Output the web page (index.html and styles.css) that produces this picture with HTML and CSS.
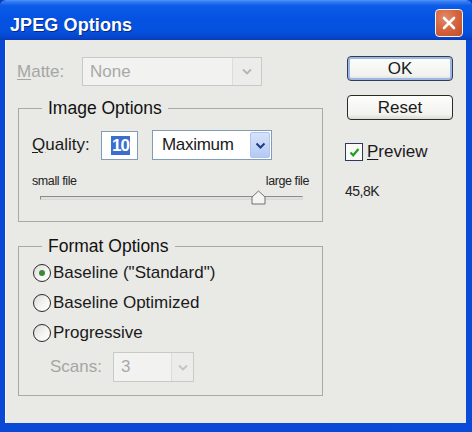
FILE: index.html
```html
<!DOCTYPE html>
<html>
<head>
<meta charset="utf-8">
<link rel="stylesheet" href="styles.css">
</head>
<body>
<div class="window">
  <div class="titlebar">
    <span class="title">JPEG Options</span>
    <button class="close" aria-label="Close">
      <svg width="16" height="16" viewBox="0 0 16 16"><path d="M3 3 L13 13 M13 3 L3 13" stroke="#fff" stroke-width="2.6" stroke-linecap="round"/></svg>
    </button>
  </div>
  <div class="client">
    <div class="left">
      <div class="matte-row">
        <span class="lbl disabled"><u>M</u>atte:</span>
        <div class="select sel-matte disabled-sel">
          <span class="val">None</span>
          <span class="drop"><svg width="10" height="7" viewBox="0 0 10 7"><path d="M1 1.5 L5 5.5 L9 1.5" fill="none" stroke="#b4b4b4" stroke-width="1.8"/></svg></span>
        </div>
      </div>
      <fieldset class="group image-group">
        <legend>Image Options</legend>
        <div class="quality-row">
          <span class="lbl q-lbl"><u>Q</u>uality:</span>
          <div class="qinput"><span class="selected">10</span></div>
          <div class="select sel-max">
            <span class="val">Maximum</span>
            <span class="drop blue"><svg width="11" height="7" viewBox="0 0 11 7"><path d="M1.5 1.5 L5.5 5.5 L9.5 1.5" fill="none" stroke="#1d3b86" stroke-width="2"/></svg></span>
          </div>
        </div>
        <div class="size-labels"><span>small file</span><span>large file</span></div>
        <div class="slider">
          <div class="track"></div>
          <svg class="thumb" width="15" height="15" viewBox="0 0 15 15"><path d="M1 14 L1 7 L7.5 1 L14 7 L14 14 Z" fill="#f4f4f2" stroke="#707070" stroke-width="1"/></svg>
        </div>
      </fieldset>
      <fieldset class="group format-group">
        <legend>Format Options</legend>
        <div class="radio-row"><span class="radio checked"></span><span>Baseline ("Standard")</span></div>
        <div class="radio-row"><span class="radio"></span><span>Baseline Optimized</span></div>
        <div class="radio-row"><span class="radio"></span><span>Progressive</span></div>
        <div class="scans-row">
          <span class="lbl disabled scans-lbl">Scans:</span>
          <div class="select sel-scans disabled-sel">
            <span class="val">3</span>
            <span class="drop"><svg width="10" height="7" viewBox="0 0 10 7"><path d="M1 1.5 L5 5.5 L9 1.5" fill="none" stroke="#c4c4c4" stroke-width="1.8"/></svg></span>
          </div>
        </div>
      </fieldset>
    </div>
    <div class="right">
      <button class="btn default">OK</button>
      <button class="btn">Reset</button>
      <div class="preview-row">
        <span class="check"><svg width="13" height="13" viewBox="0 0 13 13"><path d="M2.5 6.5 L5.2 9.3 L10.5 3" fill="none" stroke="#21a121" stroke-width="2.2"/></svg></span>
        <span><u>P</u>review</span>
      </div>
      <div class="filesize">45,8K</div>
    </div>
  </div>
</div>
</body>
</html>
```
FILE: styles.css
```css
* { box-sizing: border-box; }
html, body { margin: 0; padding: 0; }
body {
  width: 472px;
  height: 432px;
  overflow: hidden;
  font-family: "Liberation Sans", Arial, sans-serif;
  font-size: 17px;
  color: #1a1a1a;
  background: #0b3bc0;
}
.window {
  width: 472px;
  height: 432px;
  display: flex;
  flex-direction: column;
  background: linear-gradient(90deg, #0a48d6 0, #0a4ad8 100%);
  border-top: 1px solid #4c8cf6;
  border-radius: 6px 6px 0 0;
  overflow: hidden;
}
.titlebar {
  height: 39px;
  flex: none;
  display: flex;
  align-items: center;
  justify-content: space-between;
  padding: 0 9px 0 10px;
  background: linear-gradient(180deg, #3b83f4 0%, #0c5ce8 12%, #0552e2 45%, #0552e0 75%, #0747cf 92%, #0a3bb4 100%);
}
.title {
  color: #fff;
  font-weight: bold;
  font-size: 18px;
  letter-spacing: 0.1px;
  text-shadow: 1px 1px 0 #0a2a8a;
  margin-top: 10px;
}
.close {
  width: 28px;
  height: 28px;
  padding: 0;
  margin-top: 4px;
  border: 1.5px solid #f4f4f4;
  border-radius: 4px;
  background: radial-gradient(circle at 35% 30%, #e48a6c 0%, #d6663f 45%, #c04c28 100%);
  display: flex;
  align-items: center;
  justify-content: center;
}
.client {
  flex: 1;
  margin: 0 6px 9px 5px;
  background: #e9e9e6;
  border-left: 1px solid #f6f6f4;
  display: flex;
  padding: 17px 0 0 12px;
}
.left {
  width: 305px;
  display: flex;
  flex-direction: column;
}
.right {
  display: flex;
  flex-direction: column;
  padding-left: 22px;
}
u { text-decoration: underline; text-underline-offset: 2px; }
.lbl.disabled { color: #a6a6a4; }
.matte-row {
  display: flex;
  align-items: center;
  height: 29px;
  margin-left: -1px;
}
.matte-row .lbl { width: 65px; }
.select {
  display: flex;
  align-items: stretch;
  border: 1px solid #7f9db9;
  background: #fff;
}
.select .val {
  flex: 1;
  display: flex;
  align-items: center;
  padding-left: 7px;
}
.select .drop {
  width: 22px;
  display: flex;
  align-items: center;
  justify-content: center;
  margin: 1px;
  border-radius: 2px;
}
.disabled-sel {
  border-color: #c9c9c5;
  background: #f2f2f0;
  color: #a9a9a7;
}
.disabled-sel .drop {
  background: #ececea;
  border-left: 1px solid #dcdcd8;
  margin: 0;
  border-radius: 0;
}
.sel-matte { width: 180px; height: 29px; }
.sel-matte .drop { width: 29px; }
.group {
  margin: 0;
  border: 1px solid #a9a9a6;
  border-radius: 0;
  padding: 0 13px;
  min-width: 0;
}
.group legend {
  margin-left: 10px;
  padding: 0 6px 0 6px;
  font-size: 17.5px;
  color: #111;
  line-height: 20px;
}
.image-group {
  margin-top: 12px;
  padding-top: 12px;
  padding-bottom: 15px;
}
.quality-row {
  display: flex;
  align-items: center;
  height: 30px;
}
.q-lbl { width: 69px; }
.qinput {
  width: 37px;
  height: 29px;
  border: 1px solid #7f9db9;
  background: #fff;
  display: flex;
  align-items: center;
  padding-left: 9px;
}
.qinput .selected {
  background: #3a6fd0;
  color: #fff;
  line-height: 19px;
  padding: 0 1px;
  font-weight: bold;
  letter-spacing: -1px;
}
.sel-max {
  width: 120px;
  height: 30px;
  margin-left: 14px;
}
.sel-max .val { padding-left: 9px; letter-spacing: -0.3px; }
.drop.blue {
  background: linear-gradient(180deg, #d7e3fb 0%, #b5c9f3 100%);
  border: 1px solid #b1c4ef;
  width: 20px;
}
.size-labels {
  display: flex;
  justify-content: space-between;
  font-size: 12.5px;
  letter-spacing: -0.4px;
  margin-top: 14px;
  line-height: 14px;
  color: #222;
}
.slider {
  position: relative;
  height: 16px;
  margin: 2px 6px 0 8px;
}
.track {
  position: absolute;
  left: 0;
  right: 0;
  top: 6px;
  height: 4px;
  border: 1px solid #8c8c8a;
  border-bottom-color: #d8d8d6;
  border-right-color: #d8d8d6;
  background: #e0e0de;
}
.thumb {
  position: absolute;
  left: 211px;
  top: 0;
}
.format-group {
  margin-top: 14px;
  padding-top: 0;
  padding-bottom: 13px;
}
.radio-row {
  display: flex;
  align-items: center;
  height: 30px;
  margin-left: 1px;
}
.radio-row:first-of-type { margin-top: 2px; }
.radio {
  width: 18px;
  height: 18px;
  border-radius: 50%;
  border: 1.5px solid #2a2a2a;
  background: linear-gradient(135deg, #dcdcd8 0%, #f6f6f4 60%, #ffffff 100%);
  margin-right: 2px;
  display: flex;
  align-items: center;
  justify-content: center;
}
.radio.checked::after {
  content: "";
  width: 6px;
  height: 6px;
  border-radius: 50%;
  background: #3b8a3b;
}
.scans-row {
  display: flex;
  align-items: center;
  height: 30px;
  margin-top: 4px;
  margin-left: 18px;
}
.scans-lbl { width: 63px; }
.sel-scans { width: 81px; height: 30px; }
.sel-scans .drop { width: 22px; }
.btn {
  width: 106px;
  height: 25px;
  font-family: "Liberation Sans", Arial, sans-serif;
  font-size: 17px;
  color: #1a1a1a;
  border: 1px solid #2a2a2a;
  border-radius: 4px;
  background: linear-gradient(180deg, #fdfdfb 0%, #f2f2ee 80%, #dcdcd6 100%);
  padding: 0;
  line-height: 22px;
  margin-left: 2px;
}
.btn.default {
  margin-top: -1px;
  border-color: #303c58;
  box-shadow: inset 0 0 0 2px #9cb6e8;
}
.btn + .btn { margin-top: 14px; }
.preview-row {
  display: flex;
  align-items: center;
  margin-top: 22px;
  height: 20px;
}
.check {
  width: 18px;
  height: 18px;
  border: 1.5px solid #2b3a5a;
  background: #fafaf8;
  display: flex;
  align-items: center;
  justify-content: center;
  margin-right: 4px;
}
.filesize {
  margin-top: 21px;
  font-size: 14px;
  letter-spacing: -0.5px;
  color: #222;
}
```
